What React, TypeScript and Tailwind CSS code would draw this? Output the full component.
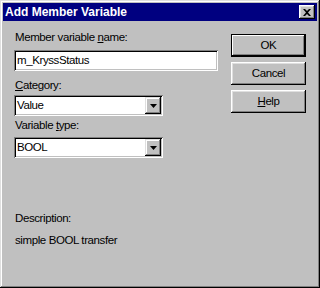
import React from 'react';

const font = { fontFamily: '"Liberation Sans", Arial, sans-serif' };

function Sunken({ children, className }: { children?: React.ReactNode; className?: string }) {
    return (
        <div className={`bg-white shadow-[inset_1px_1px_#808080,inset_-1px_-1px_#fff,inset_2px_2px_#000,inset_-2px_-2px_#c0c0c0] ${className ?? ''}`}>
            {children}
        </div>
    );
}

function Combo({ value }: { value: string }) {
    return (
        <Sunken className="flex h-[21px] w-[149px] items-stretch p-[2px]">
            <div className="flex flex-1 items-center pl-[1px] text-black">{value}</div>
            <div className="flex w-[16px] items-center justify-center bg-[#c0c0c0] shadow-[inset_-1px_-1px_#000,inset_1px_1px_#dfdfdf,inset_-2px_-2px_#808080,inset_2px_2px_#fff]">
                <svg width="7" height="4" viewBox="0 0 7 4" className="mt-[1px]">
                    <path d="M0 0h7L3.5 4z" fill="#000" />
                </svg>
            </div>
        </Sunken>
    );
}

function Button({ children, primary }: { children: React.ReactNode; primary?: boolean }) {
    const bevel = primary
        ? 'shadow-[inset_0_0_0_1px_#000,inset_-2px_-2px_#000,inset_2px_2px_#fff,inset_-3px_-3px_#808080]'
        : 'shadow-[inset_-1px_-1px_#000,inset_1px_1px_#fff,inset_-2px_-2px_#808080,inset_2px_2px_#dfdfdf]';
    return (
        <button className={`flex h-[23px] w-[75px] items-center justify-center bg-[#c0c0c0] text-black ${bevel}`}>
            {children}
        </button>
    );
}

export default function App() {
    return (
        <div style={font} className="h-[288px] w-[320px] bg-[#c0c0c0] p-[3px] text-[11.5px] leading-[15px] tracking-[-0.4px] text-black shadow-[inset_-1px_-1px_#000,inset_1px_1px_#dfdfdf,inset_-2px_-2px_#808080,inset_2px_2px_#fff]">
            <div className="flex h-[18px] items-center justify-between bg-[#000080] pl-[2px] pr-[2px]">
                <span className="text-[12px] font-bold tracking-normal text-white">Add Member Variable</span>
                <div className="flex h-[14px] w-[16px] items-center justify-center bg-[#c0c0c0] shadow-[inset_-1px_-1px_#000,inset_1px_1px_#fff,inset_-2px_-2px_#808080,inset_2px_2px_#dfdfdf]">
                    <svg width="8" height="7" viewBox="0 0 8 7">
                        <path d="M0 0h2l2 2 2-2h2L5 3.5 8 7H6L4 5 2 7H0l3-3.5z" fill="#000" />
                    </svg>
                </div>
            </div>

            <div className="flex gap-[13px] pl-[11px] pr-[11px]">
                <div className="flex w-[204px] flex-col">
                    <label className="mt-[9px] block pl-[1px]">
                        Member variable <span className="underline">n</span>ame:
                    </label>
                    <Sunken className="mt-[5px] flex h-[21px] w-[204px] items-center pl-[3px]">
                        m_KryssStatus
                    </Sunken>

                    <label className="mt-[7px] block pl-[1px]">
                        <span className="underline">C</span>ategory:
                    </label>
                    <div className="mt-[2px]">
                        <Combo value="Value" />
                    </div>

                    <label className="mt-[2px] block pl-[1px]">
                        Variable <span className="underline">t</span>ype:
                    </label>
                    <div className="mt-[4px]">
                        <Combo value="BOOL" />
                    </div>

                    <p className="mt-[53px] pl-[1px]">Description:</p>
                    <p className="mt-[7px] pl-[1px]">simple BOOL transfer</p>
                </div>

                <div className="mt-[13px] flex flex-col gap-[5px]">
                    <Button primary>OK</Button>
                    <Button>Cancel</Button>
                    <Button>
                        <span className="underline">H</span>elp
                    </Button>
                </div>
            </div>
        </div>
    );
}
